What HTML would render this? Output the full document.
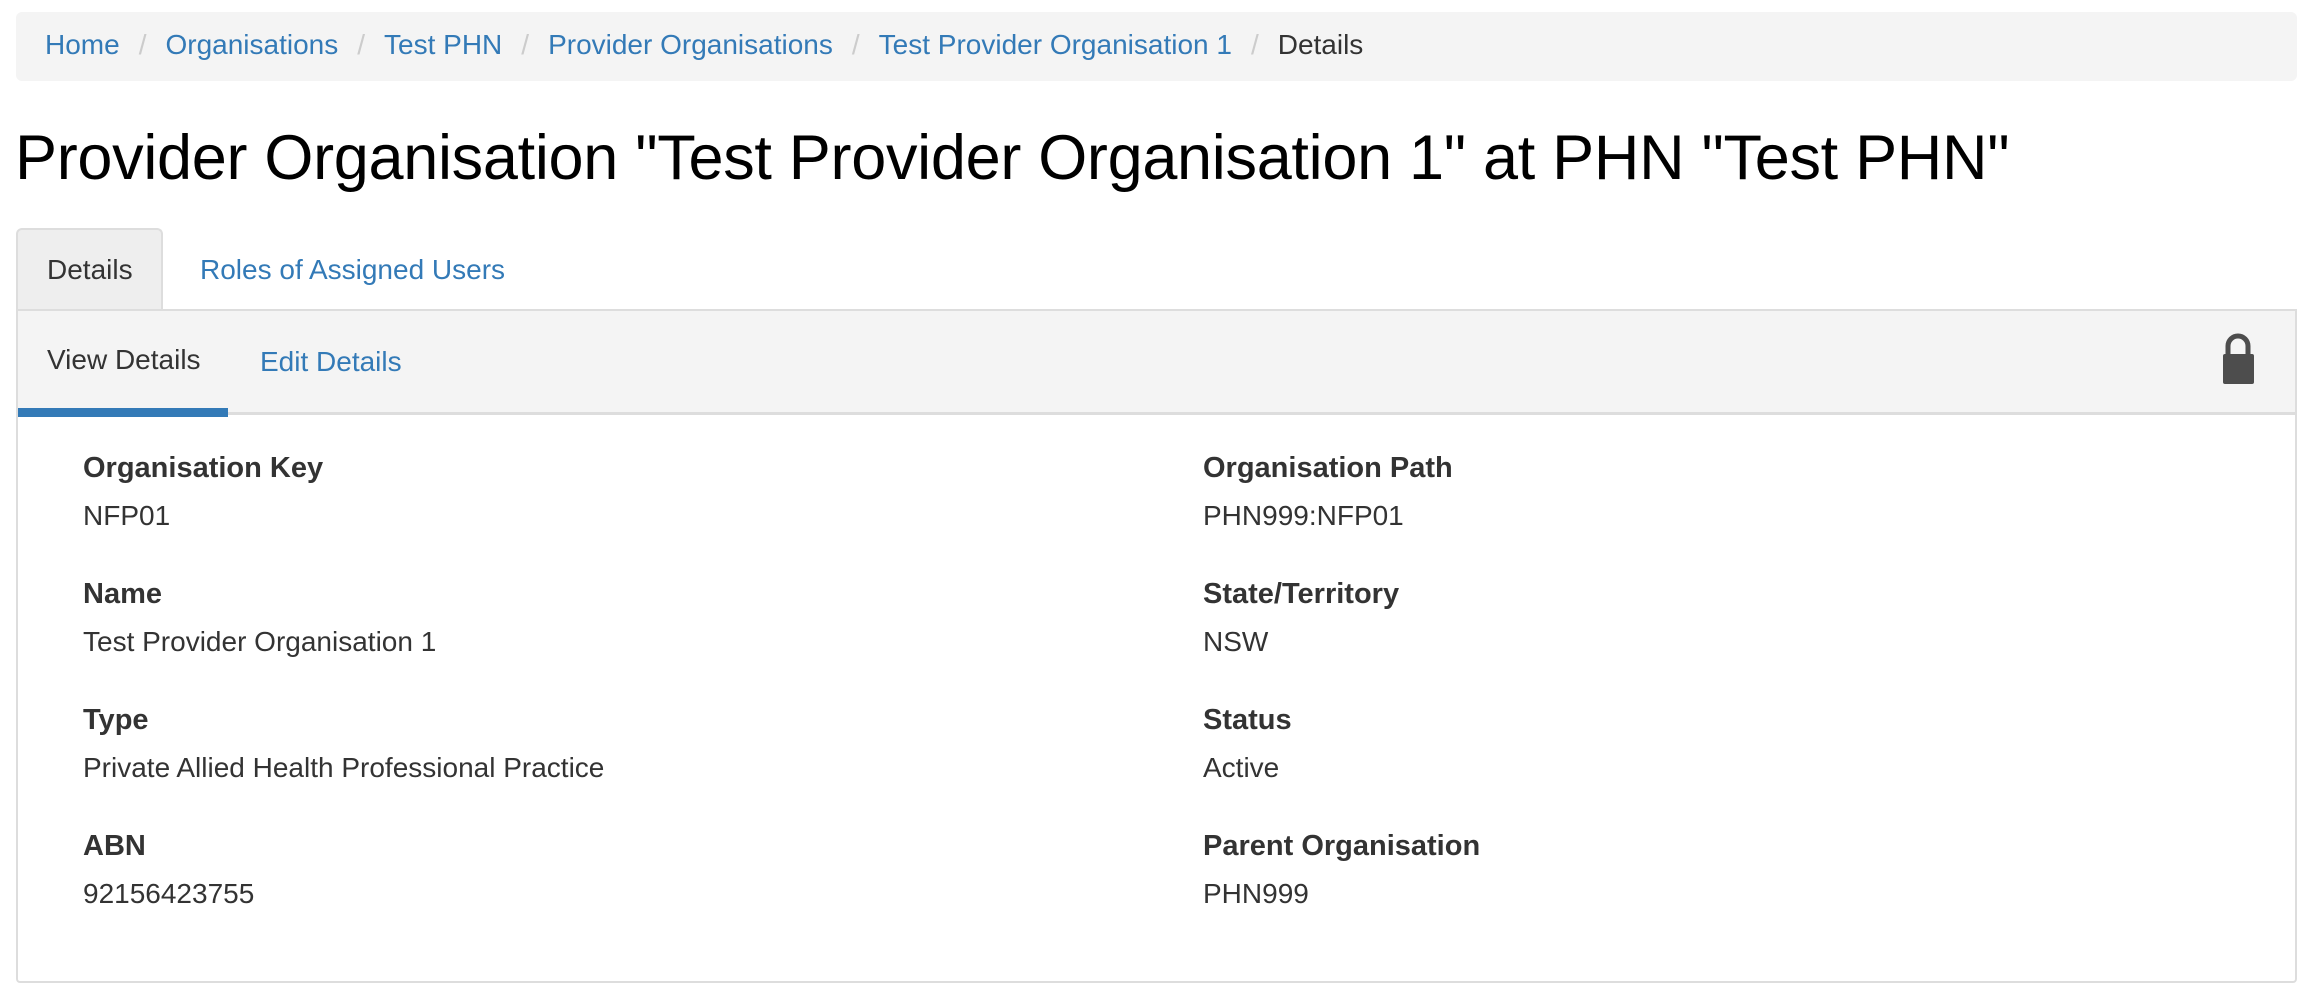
<!DOCTYPE html>
<html><head><meta charset="utf-8"><style>
*{margin:0;padding:0;box-sizing:border-box}
body{width:2312px;height:1004px;background:#fff;font-family:"Liberation Sans",sans-serif;position:relative;overflow:hidden;color:#333}
.a{position:absolute;white-space:nowrap}
.bc{left:16px;top:12px;width:2281px;height:69px;background:#f4f4f4;border-radius:6px}
.bct{top:29px;font-size:28px;color:#337ab7;left:45px}
.bct span.s{color:#ccc;padding:0 19px}
.bct span.c{color:#333}
h1{position:absolute;left:15px;top:122px;font-size:63px;font-weight:normal;color:#000;white-space:nowrap;letter-spacing:-0.3px}
.tab1{left:16px;top:228px;width:147px;height:84px;background:#eee;border:2px solid #ddd;border-bottom:none;border-radius:6px 6px 0 0}
.panel{left:16px;top:309px;width:2281px;height:674px;border:2px solid #ddd;border-radius:0 0 4px 4px}
.sub{left:18px;top:311px;width:2277px;height:104px;background:#f4f4f4;border-bottom:3px solid #ddd}
.ul{left:18px;top:408px;width:210px;height:9px;background:#337ab7}
.lab{font-size:29px;font-weight:bold;color:#333}
.val{font-size:28px;color:#333}
</style></head><body>
<div class="a bc"></div>
<div class="a bct">Home<span class="s">/</span>Organisations<span class="s">/</span>Test PHN<span class="s">/</span>Provider Organisations<span class="s">/</span>Test Provider Organisation 1<span class="s">/</span><span class="c">Details</span></div>
<h1>Provider Organisation "Test Provider Organisation 1" at PHN "Test PHN"</h1>
<div class="a tab1"></div>
<div class="a panel"></div>
<div class="a sub"></div>
<div class="a ul"></div>
<div class="a" style="left:47px;top:254px;font-size:28px;color:#333">Details</div>
<div class="a" style="left:200px;top:254px;font-size:28px;color:#337ab7">Roles of Assigned Users</div>
<div class="a" style="left:47px;top:344px;font-size:28px;color:#333">View Details</div>
<div class="a" style="left:260px;top:346px;font-size:28px;color:#337ab7">Edit Details</div>
<svg class="a" style="left:2220px;top:332px" width="36" height="54" viewBox="0 0 36 54"><path d="M8 24V14a10 10 0 0 1 20 0v10" fill="none" stroke="#4d4d4d" stroke-width="5"/><rect x="3" y="22" width="31" height="30" rx="2" fill="#4d4d4d"/></svg>

<div class="a lab" style="left:83px;top:452px">Organisation Key</div>
<div class="a val" style="left:83px;top:500px">NFP01</div>
<div class="a lab" style="left:83px;top:578px">Name</div>
<div class="a val" style="left:83px;top:626px">Test Provider Organisation 1</div>
<div class="a lab" style="left:83px;top:704px">Type</div>
<div class="a val" style="left:83px;top:752px">Private Allied Health Professional Practice</div>
<div class="a lab" style="left:83px;top:830px">ABN</div>
<div class="a val" style="left:83px;top:878px">92156423755</div>

<div class="a lab" style="left:1203px;top:452px">Organisation Path</div>
<div class="a val" style="left:1203px;top:500px">PHN999:NFP01</div>
<div class="a lab" style="left:1203px;top:578px">State/Territory</div>
<div class="a val" style="left:1203px;top:626px">NSW</div>
<div class="a lab" style="left:1203px;top:704px">Status</div>
<div class="a val" style="left:1203px;top:752px">Active</div>
<div class="a lab" style="left:1203px;top:830px">Parent Organisation</div>
<div class="a val" style="left:1203px;top:878px">PHN999</div>
</body></html>
